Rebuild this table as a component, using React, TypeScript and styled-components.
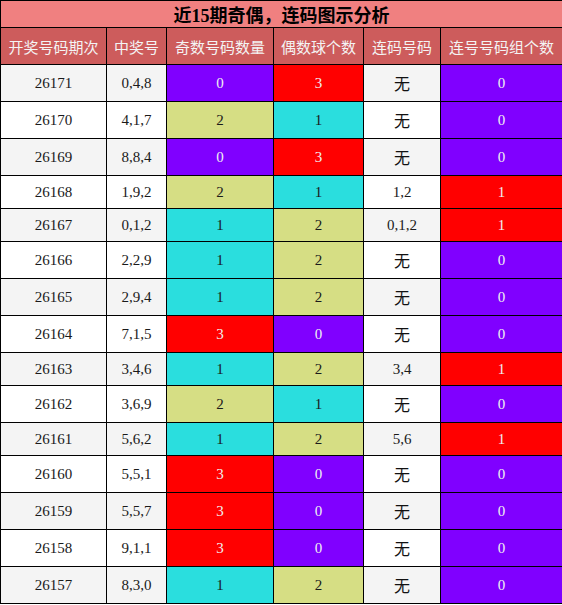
import React from 'react'
import styled, { createGlobalStyle } from 'styled-components'

const GlobalStyle = createGlobalStyle`
  body {
    margin: 0;
    background: #ffffff;
    font-family: "Liberation Serif", "Noto Sans CJK SC", serif;
  }
`

const Table = styled('table')`
  width: 562px;
  border-collapse: collapse;
  table-layout: fixed;
  border: 1px solid #000;
`

const TitleCell = styled('th')`
  background-color: #f08080;
  color: #000;
  font-family: "Liberation Serif", "Noto Sans CJK SC", serif;
  font-size: 18px;
  font-weight: bold;
  height: 26px;
  padding: 0;
  border: 1px solid #000;
`

const HeadCell = styled('th')`
  background-color: #cd5c5c;
  color: #f4f4f4;
  font-family: "Noto Sans CJK SC", sans-serif;
  font-size: 15px;
  font-weight: normal;
  height: 36px;
  padding: 0;
  border: 1px solid #000;
`

const Row = styled('tr')<{ $odd: boolean }>`
  background-color: ${(p) => (p.$odd ? '#f4f4f4' : '#ffffff')};
`

const Cell = styled('td')<{ $bg?: string; $light?: boolean }>`
  text-align: center;
  font-family: "Liberation Serif", serif;
  font-size: 15px;
  color: ${(p) => (p.$light ? '#f0f0f0' : '#1a1a1a')};
  background-color: ${(p) => p.$bg || 'transparent'};
  padding: 8px 0;
  line-height: 16px;
  border: 1px solid #000;
`

const None = styled('span')`
  font-family: "Noto Sans CJK SC", sans-serif;
  font-size: 16px;
  line-height: 20px;
  color: #111;
`

// colours of the odd / even count cells
const colors: Record<string, { bg: string; light: boolean }> = {
  '0': { bg: '#8000ff', light: true },
  '3': { bg: '#ff0000', light: true },
  '1': { bg: '#2adede', light: false },
  '2': { bg: '#d6de84', light: false },
}

const groupColor = (n: number) =>
  n > 0 ? { bg: '#ff0000', light: true } : { bg: '#8000ff', light: true }

const rows = [
  ['26171', '0,4,8', 0, 3, '', 0],
  ['26170', '4,1,7', 2, 1, '', 0],
  ['26169', '8,8,4', 0, 3, '', 0],
  ['26168', '1,9,2', 2, 1, '1,2', 1],
  ['26167', '0,1,2', 1, 2, '0,1,2', 1],
  ['26166', '2,2,9', 1, 2, '', 0],
  ['26165', '2,9,4', 1, 2, '', 0],
  ['26164', '7,1,5', 3, 0, '', 0],
  ['26163', '3,4,6', 1, 2, '3,4', 1],
  ['26162', '3,6,9', 2, 1, '', 0],
  ['26161', '5,6,2', 1, 2, '5,6', 1],
  ['26160', '5,5,1', 3, 0, '', 0],
  ['26159', '5,5,7', 3, 0, '', 0],
  ['26158', '9,1,1', 3, 0, '', 0],
  ['26157', '8,3,0', 1, 2, '', 0],
] as const

const headers = ['开奖号码期次', '中奖号', '奇数号码数量', '偶数球个数', '连码号码', '连号号码组个数']
const widths = [106, 60, 107, 90, 77, 122]

function App() {
  return (
    <>
      <GlobalStyle />
      <Table>
        <colgroup>
          {widths.map((w, i) => (
            <col key={i} style={{ width: w }} />
          ))}
        </colgroup>
        <thead>
          <tr>
            <TitleCell colSpan={6}>近15期奇偶，连码图示分析</TitleCell>
          </tr>
          <tr>
            {headers.map((h) => (
              <HeadCell key={h}>{h}</HeadCell>
            ))}
          </tr>
        </thead>
        <tbody>
          {rows.map((r, i) => {
            const odd = colors[String(r[2])]
            const even = colors[String(r[3])]
            const grp = groupColor(r[5])
            return (
              <Row key={r[0]} $odd={i % 2 === 0}>
                <Cell>{r[0]}</Cell>
                <Cell>{r[1]}</Cell>
                <Cell $bg={odd.bg} $light={odd.light}>{r[2]}</Cell>
                <Cell $bg={even.bg} $light={even.light}>{r[3]}</Cell>
                <Cell>{r[4] ? r[4] : <None>无</None>}</Cell>
                <Cell $bg={grp.bg} $light={grp.light}>{r[5]}</Cell>
              </Row>
            )
          })}
        </tbody>
      </Table>
    </>
  )
}

export default App
